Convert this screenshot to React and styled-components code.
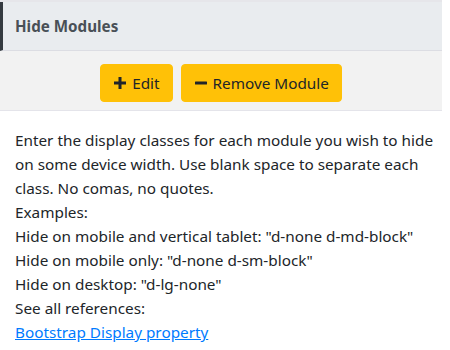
import React from 'react';
import styled, { createGlobalStyle } from 'styled-components';

const Global = createGlobalStyle`
  body {
    margin: 0;
    background: #fff;
    font-family: "Noto Sans", "Open Sans", sans-serif;
    color: #212529;
  }
`;

const Panel = styled.div`
  width: 442px;
  border-top: 2px solid #e6e6ea;
`;

const Header = styled.div`
  background: #e9ecef;
  border-left: 3px solid #343a40;
  border-bottom: 1px solid #dcdde3;
  padding: 12px 12px;
  font-size: 15.2px;
  font-weight: 700;
  line-height: 24px;
  color: #495057;
`;

const Toolbar = styled.div`
  background: #f2f2f2;
  border-bottom: 1px solid #e4e4ea;
  display: flex;
  justify-content: center;
  gap: 8px;
  padding: 13px 0 8px;
`;

const Button = styled.button`
  display: flex;
  align-items: center;
  gap: 5px;
  background: #ffc107;
  border: 1px solid #ffc107;
  border-radius: 4px;
  padding: 6px 12px;
  font-family: inherit;
  font-size: 15.3px;
  line-height: 24px;
  color: #212529;
  cursor: pointer;
`;

const Body = styled.div`
  padding: 17px 0 17px 15px;
  font-size: 15.3px;
  line-height: 24px;
`;

const Line = styled.div``;

const Link = styled.a`
  color: #007bff;
  text-decoration: underline;
`;

const Plus = () => (
  <svg width="14" height="14" viewBox="0 0 14 14">
    <path d="M5.5 1h3v4.5H13v3H8.5V13h-3V8.5H1v-3h4.5z" fill="#212529" />
  </svg>
);

const Minus = () => (
  <svg width="14" height="14" viewBox="0 0 14 14">
    <rect x="1" y="5.5" width="12" height="3" rx="0.5" fill="#212529" />
  </svg>
);

export default function App() {
  return (
    <>
      <Global />
      <Panel>
        <Header>Hide Modules</Header>
        <Toolbar>
          <Button><Plus />Edit</Button>
          <Button><Minus />Remove Module</Button>
        </Toolbar>
        <Body>
          <Line>
            Enter the display classes for each module you wish to hide on some device width. Use blank space to separate each class. No comas, no quotes.
          </Line>
          <Line>Examples:</Line>
          <Line>Hide on mobile and vertical tablet: "d-none d-md-block"</Line>
          <Line>Hide on mobile only: "d-none d-sm-block"</Line>
          <Line>Hide on desktop: "d-lg-none"</Line>
          <Line>See all references:</Line>
          <Line><Link href="#">Bootstrap Display property</Link></Line>
        </Body>
      </Panel>
    </>
  );
}
